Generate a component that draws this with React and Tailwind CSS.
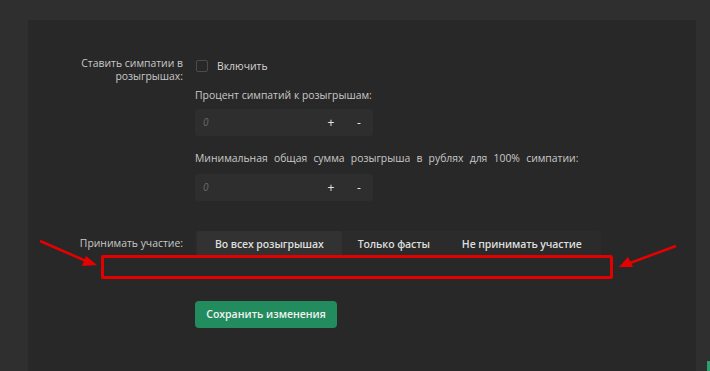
import React from "react";

const font = { fontFamily: '"Open Sans", "Noto Sans", sans-serif' };

function Stepper() {
    return (
        <div className="flex h-[27px] w-[178px] rounded-[3px] bg-[#2e2e2e]">
            <div className="flex flex-1 items-center pl-[8px] text-[10px] italic text-[#6a6a6a]">0</div>
            <div className="flex w-[28px] items-center justify-center text-[12px] text-[#e6e6e6]">+</div>
            <div className="flex w-[28px] items-center justify-center text-[12px] text-[#e6e6e6]">-</div>
        </div>
    );
}

function Arrows() {
    return (
        <svg className="pointer-events-none absolute left-0 top-0" width="710" height="371">
            <line x1="40" y1="241" x2="86" y2="261" stroke="#e60000" strokeWidth="2.5" />
            <polygon points="97,265 82,266 86,256" fill="#e60000" />
            <line x1="676" y1="246" x2="630" y2="263" stroke="#e60000" strokeWidth="2.5" />
            <polygon points="619,267 628,257 633,267" fill="#e60000" />
        </svg>
    );
}

export default function App() {
    const tabs = ["Во всех розыгрышах", "Только фасты", "Не принимать участие"];

    return (
        <div className="relative flex h-[371px] w-[710px] overflow-hidden bg-[#2f2f2f]" style={font}>
            <div className="ml-[28px] mt-[20px] w-[668px] bg-[#282828] pt-[37px] text-[10.4px] leading-[13px] text-[#c9c9c9]">
                <div className="flex">
                    <div className="w-[155px] text-right">
                        Ставить симпатии в
                        <br />
                        розыгрышах:
                    </div>
                    <div className="ml-[12px] flex flex-col">
                        <div className="flex h-[18px] items-center">
                            <div className="ml-[1px] h-[12px] w-[12px] rounded-[2px] border border-[#4c4c4c]" />
                            <span className="ml-[9px] text-[#d4d4d4]">Включить</span>
                        </div>
                        <div className="mt-[13px] leading-[14px]">Процент симпатий к розыгрышам:</div>
                        <div className="mt-[7px]">
                            <Stepper />
                        </div>
                        <div className="mt-[15px] leading-[14px] [word-spacing:3.5px]">
                            Минимальная общая сумма розыгрыша в рублях для 100% симпатии:
                        </div>
                        <div className="mt-[9px]">
                            <Stepper />
                        </div>
                    </div>
                </div>

                <div className="mt-[30px] flex">
                    <div className="w-[155px] pt-[6px] text-right">Принимать участие:</div>
                    <div className="ml-[12px] flex h-[27px] items-stretch rounded-[3px] bg-[#2b2b2b] pl-[2px] pr-[3px]">
                        {tabs.map((t, i) => (
                            <div
                                key={t}
                                className={
                                    i === 0
                                        ? "flex items-center rounded-[3px] bg-[#323232] px-[18px] text-[10.5px] font-semibold tracking-[-0.1px] text-[#dedede]"
                                        : "flex items-center px-[16px] text-[10.5px] font-semibold tracking-[-0.1px] text-[#dedede]"
                                }
                            >
                                {t}
                            </div>
                        ))}
                    </div>
                </div>

                <div className="ml-[167px] mt-[43px]">
                    <button className="h-[27px] w-[142px] rounded-[4px] bg-[#228c5e] text-[10.5px] font-semibold text-[#f2f2f2]">
                        Сохранить изменения
                    </button>
                </div>
            </div>

            <div className="flex w-[14px] flex-col justify-end">
                <div className="ml-[11px] h-[10px] w-[3px] bg-[#2aa06a]" />
            </div>

            <div className="absolute left-[101px] top-[255px] h-[24px] w-[512px] rounded-[2px] border-[3px] border-[#e50000]" />
            <Arrows />
        </div>
    );
}
